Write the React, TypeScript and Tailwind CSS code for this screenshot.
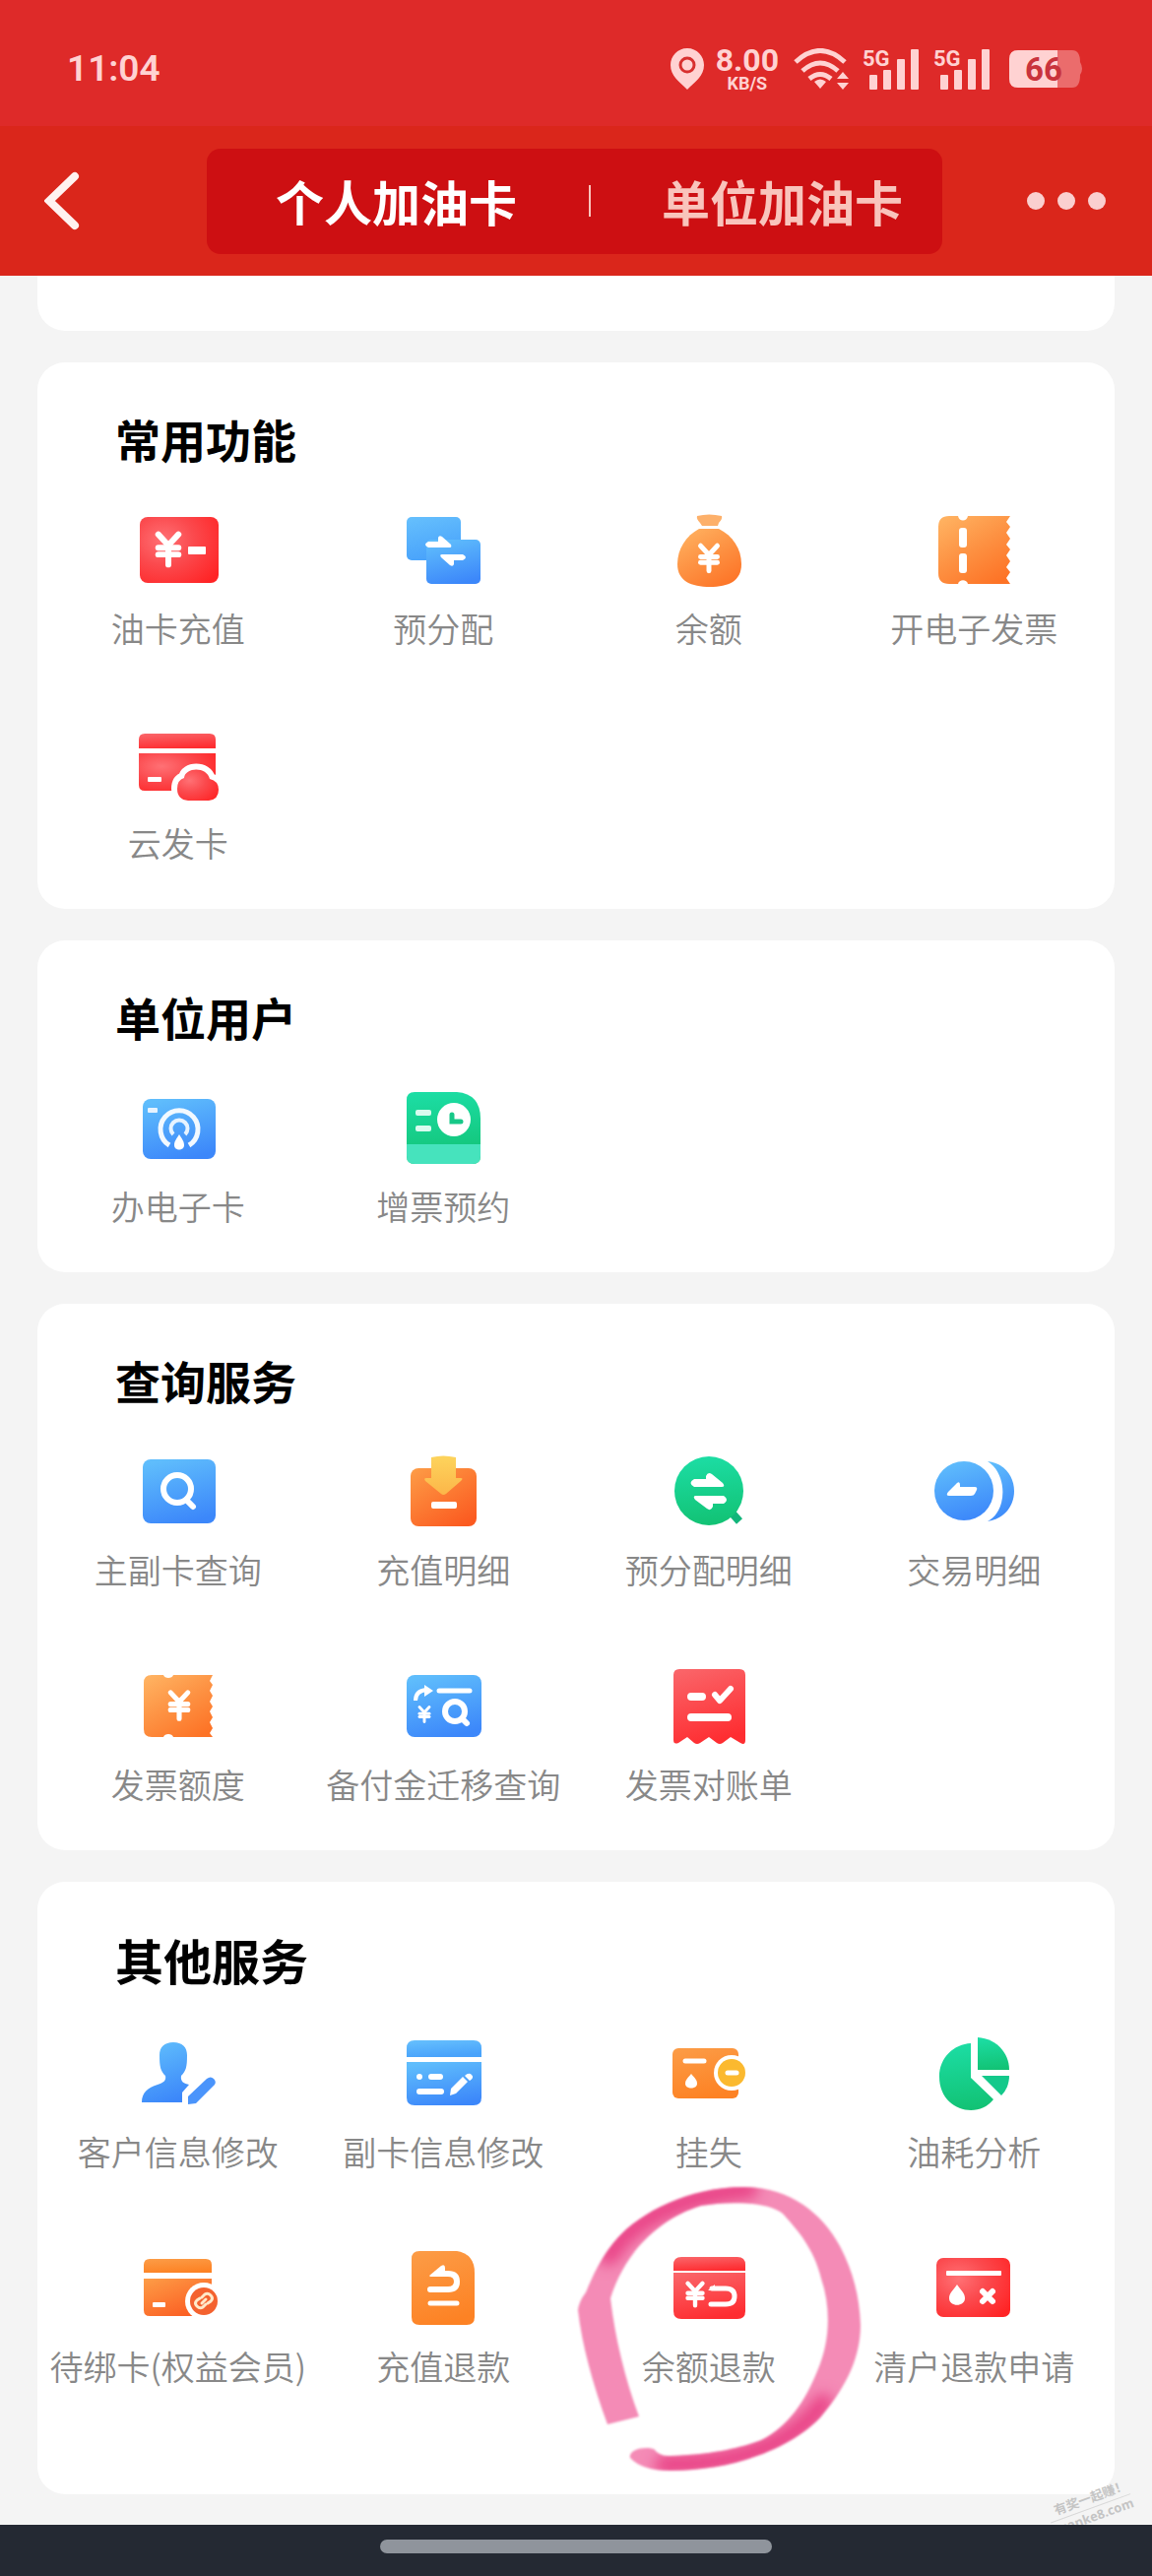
import type { ReactNode } from 'react'
import { clsx } from 'clsx'
import { JapaneseYen } from 'lucide-react'

type Item = { label: string; icon: ReactNode; marked?: boolean }
type Section = { title: string; items: Item[]; last?: boolean }

// Gradients shared by all the service icons
const Gradients = () => (
  <svg className="absolute h-0 w-0" aria-hidden="true">
    <defs>
      <radialGradient id="red" cx="0.3" cy="0.35" r="0.85">
        <stop offset="0" stopColor="#ff7175" />
        <stop offset="0.45" stopColor="#fb4a4e" />
        <stop offset="1" stopColor="#ff2425" />
      </radialGradient>
      <linearGradient id="redDown" x1="0.2" y1="0" x2="0.5" y2="1">
        <stop offset="0" stopColor="#fa6468" />
        <stop offset="1" stopColor="#fe2d31" />
      </linearGradient>
      <linearGradient id="blue" x1="0.3" y1="0" x2="0.6" y2="1">
        <stop offset="0" stopColor="#5fbdfc" />
        <stop offset="1" stopColor="#3c87fa" />
      </linearGradient>
      <linearGradient id="sky" x1="0" y1="0" x2="0.3" y2="1">
        <stop offset="0" stopColor="#66c0fd" />
        <stop offset="1" stopColor="#49a3fb" />
      </linearGradient>
      <linearGradient id="orange" x1="0.15" y1="0" x2="0.8" y2="1">
        <stop offset="0" stopColor="#ffb160" />
        <stop offset="0.5" stopColor="#fd9142" />
        <stop offset="1" stopColor="#fd7326" />
      </linearGradient>
      <linearGradient id="amber" x1="0.2" y1="0" x2="0.5" y2="1">
        <stop offset="0" stopColor="#fc9b45" />
        <stop offset="1" stopColor="#fd8224" />
      </linearGradient>
      <linearGradient id="flame" x1="0.1" y1="0" x2="0.8" y2="1">
        <stop offset="0" stopColor="#fd9a45" />
        <stop offset="1" stopColor="#fb5a20" />
      </linearGradient>
      <linearGradient id="yellow" x1="0" y1="0" x2="0" y2="1">
        <stop offset="0" stopColor="#fdd45c" />
        <stop offset="1" stopColor="#fcb649" />
      </linearGradient>
      <linearGradient id="green" x1="0.4" y1="0" x2="0.5" y2="1">
        <stop offset="0" stopColor="#1cdda4" />
        <stop offset="1" stopColor="#12c274" />
      </linearGradient>
    </defs>
  </svg>
)

const Glyph = ({ children }: { children: ReactNode }) => (
  <svg viewBox="0 0 80 80" className="h-20 w-20 overflow-visible" aria-hidden="true">
    {children}
  </svg>
)

// x and y are the centre of the sign
const Yen = ({ x, y, size }: { x: number; y: number; size: number }) => (
  <JapaneseYen x={x - size / 2} y={y - size / 2} size={size} color="#fff" strokeWidth={3.5} />
)

const line = { stroke: '#fff', strokeLinecap: 'round', strokeLinejoin: 'round', fill: 'none' } as const

const RechargeIcon = () => (
  <Glyph>
    <rect x="1" y="7" width="80" height="67" rx="8" fill="url(#red)" />
    <Yen x={30} y={40} size={41} />
    <rect x="50" y="37" width="18" height="8" rx="1" fill="#fff" />
  </Glyph>
)

const AllocateIcon = () => (
  <Glyph>
    <rect x="3" y="7" width="55" height="44" rx="5" fill="url(#sky)" />
    <rect x="23" y="30" width="55" height="45" rx="5" fill="url(#blue)" />
    <path d="M25 32h10v-4q1-3 4-1l9 8q1 3-1 3H25q-6-3 0-6z" fill="#fff" />
    <path d="M60 45H39q-3 0-1 3l9 8q3 2 4-1v-4h9q6-3 0-6z" fill="#fff" />
  </Glyph>
)

const BagIcon = () => (
  <Glyph>
    <path d="M28 6q12-3 25 0q1 3-3 7l-1 3H33l-2-3q-4-4-3-7z" fill="#fdb06a" />
    <path d="M30 19h20c14 7 23 20 23 36 0 17-13 23-32 23S8 72 8 55c0-16 9-29 22-36z" fill="url(#orange)" />
    <Yen x={40} y={49} size={34} />
  </Glyph>
)

const TicketIcon = () => (
  <Glyph>
    <path
      d="M15 6h9c1 6 9 6 10 0h43l-4 6 4 5-4 6 4 6-4 6 4 5-4 6 4 6-4 6 4 5-4 6 4 6H34c-1-5-9-5-10 0h-9Q4 75 4 64V17Q4 6 15 6z"
      fill="url(#orange)"
    />
    <rect x="25" y="18" width="8" height="20" rx="3" fill="#fff" />
    <rect x="25" y="44" width="8" height="20" rx="3" fill="#fff" />
  </Glyph>
)

const CloudCardIcon = () => (
  <Glyph>
    <path d="M6 9h66q6 0 6 6v9H0v-9q0-6 6-6z" fill="url(#redDown)" />
    <path d="M0 29h78v38H6q-6 0-6-6z" fill="url(#red)" />
    <rect x="9" y="53" width="14" height="5" rx="1" fill="#fff" />
    <path
      d="M50 77q-11-1-11-12 0-9 7-11c1-11 23-12 26 1q9 2 9 11 0 10-10 11z"
      fill="#fff"
      stroke="#fff"
      strokeWidth="12"
    />
    <path d="M50 77q-11-1-11-12 0-9 7-11c1-11 23-12 26 1q9 2 9 11 0 10-10 11z" fill="url(#red)" />
  </Glyph>
)

const ECardIcon = () => (
  <Glyph>
    <rect x="4" y="11" width="74" height="61" rx="8" fill="url(#blue)" />
    <rect x="9" y="20" width="10" height="5" rx="1" fill="#e6f3ff" />
    <path d="M31 58a19 19 0 1 1 20 0" {...line} stroke="#f2f9ff" strokeWidth="5" strokeLinecap="butt" />
    <path d="M35 47a8.500 8.500 0 1 1 12 0" {...line} stroke="#e6f3ff" strokeWidth="4" strokeLinecap="butt" />
    <path d="M41 47c3 5 5 7 5 11 0 6-10 6-10 0 0-4 2-6 5-11z" fill="#fff" />
  </Glyph>
)

const ReserveIcon = () => (
  <Glyph>
    <path d="M11 4h43q24 2 24 27v38q0 8-8 8H11q-8 0-8-8V12q0-8 8-8z" fill="url(#green)" />
    <path d="M3 57h75v12q0 8-8 8H11q-8 0-8-8z" fill="#46e3bd" />
    <rect x="12" y="22" width="16" height="6" rx="2" fill="#d9fbef" />
    <rect x="12" y="38" width="16" height="6" rx="2" fill="#d9fbef" />
    <circle cx="51" cy="32" r="17" fill="#fff" />
    <path d="M49 27v7h9" fill="none" stroke="#17c888" strokeWidth="5" strokeLinecap="round" />
  </Glyph>
)

const SearchCardIcon = () => (
  <Glyph>
    <rect x="4" y="8" width="74" height="65" rx="8" fill="url(#blue)" />
    <circle cx="39" cy="38" r="14" {...line} strokeWidth="6" />
    <path d="M50 51l5 5" {...line} strokeWidth="6" />
  </Glyph>
)

const RechargeListIcon = () => (
  <Glyph>
    <rect x="7" y="17" width="67" height="59" rx="8" fill="url(#flame)" />
    <path d="M28 6q12-3 25 0v21h5q3 0 0 3L43 43q-3 2-5 0L22 30q-2-3 1-3h5z" fill="url(#yellow)" />
    <rect x="28" y="51" width="26" height="7" rx="2" fill="#fff" />
  </Glyph>
)

const AllocateListIcon = () => (
  <Glyph>
    <path d="M63 62l8 9" fill="none" stroke="#12b57a" strokeWidth="8" />
    <circle cx="40" cy="40" r="35" fill="url(#green)" />
    <path d="M25 28h12v-3q2-5 6-2l11 9q3 4-1 4H25q-7-4 0-8z" fill="#fff" />
    <path d="M55 45H27q-4 0-1 4l12 9q4 3 6-2v-3h11q6-4 0-8z" fill="#fff" />
  </Glyph>
)

const TradeIcon = () => (
  <Glyph>
    <path d="M54 10C90 14 90 66 54 71 75 60 74 22 54 10z" fill="url(#blue)" />
    <circle cx="30" cy="40" r="30" fill="url(#blue)" />
    <path d="M14 41l9-9q3-2 3 2v2h15q3 0 2 3l-2 4q-1 2-4 2H15q-4 0-1-4z" fill="#fff" />
  </Glyph>
)

const QuotaIcon = () => (
  <Glyph>
    <path
      d="M13 9h12c1 4 9 4 10 0h40l-3 6 3 4-3 6 3 5-3 6 3 5-3 5 3 6-3 5 3 6-3 5 3 4H35c-1-4-9-4-10 0H13q-8 0-8-8V17q0-8 8-8z"
      fill="url(#orange)"
    />
    <Yen x={41} y={40} size={35} />
  </Glyph>
)

const MigrateIcon = () => (
  <Glyph>
    <rect x="3" y="9" width="76" height="63" rx="8" fill="url(#blue)" />
    <path d="M36 25h31" {...line} strokeWidth="5" />
    <path d="M12 35q0-10 11-11" {...line} strokeWidth="4" strokeLinecap="butt" />
    <path d="M21 19l9 6-9 6z" fill="#fff" />
    <Yen x={21} y={49} size={20} />
    <circle cx="52" cy="46" r="10" {...line} strokeWidth="6" />
    <path d="M60 54l4 4" {...line} strokeWidth="6" />
  </Glyph>
)

const ReceiptIcon = () => (
  <Glyph>
    <path
      d="M10 3h61q6 0 6 6v66q0 6-5 3l-10-6-8 6q-3 2-6 0l-8-6-9 6q-3 2-6 0l-7-6-9 6q-5 2-5-3V9q0-6 6-6z"
      fill="url(#redDown)"
    />
    <path d="M22 31h11M22 52h37" {...line} strokeWidth="8" />
    <path d="M46 29l5 6 11-12" {...line} strokeWidth="6" />
  </Glyph>
)

const CustomerIcon = () => (
  <Glyph>
    <path
      d="M35 9c9 0 14 5 14 13 0 12-1 16-6 21-1 6 3 8 8 9l-7 8v10H3c0-10 6-15 16-18 6-2 9-4 8-9-5-5-6-9-6-21C21 14 26 9 35 9z"
      fill="url(#blue)"
    />
    <path d="M50 72v-8l19-18q4-3 7 0t1 6L58 71z" fill="#4a94fb" />
  </Glyph>
)

const SubCardIcon = () => (
  <Glyph>
    <path d="M11 7h60q8 0 8 8v9H3v-9q0-8 8-8z" fill="url(#sky)" />
    <path d="M3 29h76v36q0 8-8 8H11q-8 0-8-8z" fill="url(#blue)" />
    <circle cx="16" cy="44" r="3" fill="#fff" />
    <path d="M28 44h9M16 59h22" {...line} strokeWidth="6" />
    <path d="M47 63l1-7 12-12 5 5-12 12zM62 43q4-4 7-1t-2 6z" fill="#fff" />
  </Glyph>
)

const LossIcon = () => (
  <Glyph>
    <rect x="3" y="15" width="67" height="51" rx="6" fill="url(#amber)" />
    <circle cx="63" cy="40" r="18" fill="#fff" />
    <circle cx="63" cy="40" r="14" fill="#fbb92f" />
    <path d="M59 40h9" {...line} strokeWidth="5" />
    <path d="M16 28h19" {...line} strokeWidth="5" />
    <path d="M22 41c4 5 6 6 6 10 0 6-12 6-12 0 0-4 2-5 6-10z" fill="#fff" />
  </Glyph>
)

const PieIcon = () => (
  <Glyph>
    <path d="M37 10v35l23 22C44 88 5 78 5 44 5 24 20 11 37 10z" fill="url(#green)" />
    <path d="M44 4c17 1 32 14 32 33H44z" fill="url(#green)" />
    <path d="M48 43h28c0 8-3 15-8 20z" fill="#14c98b" />
  </Glyph>
)

const BindCardIcon = () => (
  <Glyph>
    <path d="M11 11h57q6 0 6 6v8H5v-8q0-6 6-6z" fill="url(#amber)" />
    <path d="M5 31h69v38H11q-6 0-6-6z" fill="url(#flame)" />
    <rect x="14" y="55" width="13" height="5" rx="1" fill="#fff" />
    <circle cx="66" cy="54" r="19" fill="#fff" />
    <circle cx="66" cy="54" r="14" fill="#f4622f" />
    <path
      d="M64 50l3-3q3-2 6 1t0 6l-3 2M68 57l-3 3q-3 2-6-1t0-6l3-2M64 56l4-4"
      {...line}
      stroke="#ffe9c9"
      strokeWidth="3"
    />
  </Glyph>
)

const RefundIcon = () => (
  <Glyph>
    <path d="M16 3h38q18 3 18 22v45q0 8-8 8H16q-8 0-8-8V11q0-8 8-8z" fill="url(#amber)" />
    <path d="M34 26h11q9 0 9 8t-9 8H27" {...line} strokeWidth="6" />
    <path d="M26 28l12-10q4-2 4 2v9H27z" fill="#fff" />
    <path d="M27 56h27" {...line} strokeWidth="5" />
  </Glyph>
)

const BalanceRefundIcon = () => (
  <Glyph>
    <path d="M12 9h57q8 0 8 8v6H4v-6q0-8 8-8z" fill="url(#redDown)" />
    <path d="M4 25h73v39q0 8-8 8H12q-8 0-8-8z" fill="url(#redDown)" />
    <Yen x={26} y={47} size={30} />
    <path d="M43 41h14q9 0 9 8t-9 8H42" {...line} strokeWidth="5" />
    <path d="M39 43l7-6v6z" fill="#fff" />
  </Glyph>
)

const CloseAccountIcon = () => (
  <Glyph>
    <rect x="2" y="10" width="75" height="60" rx="7" fill="url(#red)" />
    <rect x="12" y="23" width="56" height="5" rx="1" fill="#fff" />
    <path d="M23 37c5 7 8 9 8 14 0 9-16 9-16 0 0-5 3-7 8-14z" fill="#fff" />
    <path d="M49 44l10 10M59 44L49 54" {...line} strokeWidth="6" />
  </Glyph>
)

const sections: Section[] = [
  {
    title: '常用功能',
    items: [
      { label: '油卡充值', icon: <RechargeIcon /> },
      { label: '预分配', icon: <AllocateIcon /> },
      { label: '余额', icon: <BagIcon /> },
      { label: '开电子发票', icon: <TicketIcon /> },
      { label: '云发卡', icon: <CloudCardIcon /> },
    ],
  },
  {
    title: '单位用户',
    items: [
      { label: '办电子卡', icon: <ECardIcon /> },
      { label: '增票预约', icon: <ReserveIcon /> },
    ],
  },
  {
    title: '查询服务',
    items: [
      { label: '主副卡查询', icon: <SearchCardIcon /> },
      { label: '充值明细', icon: <RechargeListIcon /> },
      { label: '预分配明细', icon: <AllocateListIcon /> },
      { label: '交易明细', icon: <TradeIcon /> },
      { label: '发票额度', icon: <QuotaIcon /> },
      { label: '备付金迁移查询', icon: <MigrateIcon /> },
      { label: '发票对账单', icon: <ReceiptIcon /> },
    ],
  },
  {
    title: '其他服务',
    last: true,
    items: [
      { label: '客户信息修改', icon: <CustomerIcon /> },
      { label: '副卡信息修改', icon: <SubCardIcon /> },
      { label: '挂失', icon: <LossIcon /> },
      { label: '油耗分析', icon: <PieIcon /> },
      { label: '待绑卡(权益会员)', icon: <BindCardIcon /> },
      { label: '充值退款', icon: <RefundIcon /> },
      { label: '余额退款', icon: <BalanceRefundIcon />, marked: true },
      { label: '清户退款申请', icon: <CloseAccountIcon /> },
    ],
  },
]

// Hand-drawn marker ring
const MarkerRing = () => (
  <svg
    viewBox="560 2212 320 304"
    className="pointer-events-none absolute -top-8 left-1/2 h-[304px] w-[320px] -translate-x-1/2"
    aria-hidden="true"
  >
    <defs>
      <filter id="soft" x="-5%" y="-5%" width="110%" height="110%">
        <feGaussianBlur stdDeviation="1.2" />
      </filter>
      <filter id="softer" x="-20%" y="-20%" width="140%" height="140%">
        <feGaussianBlur stdDeviation="7" />
      </filter>
      <clipPath id="ring">
        <path d="M617 2461C602 2420 591 2380 587 2345Q588 2336 595 2327C604 2305 613 2288 627 2272 650 2246 700 2220 754 2220 800 2219 835 2246 853 2280 866 2305 873 2330 874 2360 874 2390 862 2420 834 2453 805 2485 745 2508 681 2508Q652 2508 640 2495C638 2486 655 2483 664 2486Q670 2494 681 2493C725 2492 755 2484 773 2477 800 2464 818 2437 830 2407 842 2380 845 2345 834 2313 826 2280 808 2262 795 2247 780 2235 740 2234 712 2239 670 2252 635 2285 620 2333 625 2375 635 2415 649 2453z" />
      </clipPath>
    </defs>
    <g filter="url(#soft)">
      <g clipPath="url(#ring)">
        <rect x="558" y="2212" width="322" height="304" fill="#f48bb6" />
        <g fill="none" strokeLinecap="round" filter="url(#softer)">
          <path d="M618 2290Q655 2233 760 2222" stroke="#e94587" strokeWidth="20" />
          <path d="M836 2440Q790 2502 675 2502" stroke="#e94587" strokeWidth="20" />
        </g>
      </g>
    </g>
  </svg>
)

const SignalIcon = () => (
  <svg viewBox="0 0 58 44" className="h-11 w-[58px] overflow-visible" fill="#ffd2d2" aria-hidden="true">
    <text x="0" y="19" fontSize="22" className="font-[Roboto,sans-serif] font-bold">
      5G
    </text>
    <rect x="7" y="28" width="8" height="15" rx="1" />
    <rect x="21" y="23" width="8" height="20" rx="1" />
    <rect x="35" y="12" width="8" height="31" rx="1" />
    <rect x="49" y="2" width="8" height="41" rx="1" />
  </svg>
)

const StatusBar = () => (
  <div className="flex h-32 items-center justify-between bg-[#de2a29] pt-3 pr-[71px] pl-[68px] font-[Roboto,sans-serif] text-[#ffd2d2]">
    <span className="text-[37px] font-semibold">11:04</span>
    <div className="flex items-center">
      <svg viewBox="0 0 34 42" className="h-[42px] w-[34px]" aria-hidden="true">
        <path d="M17 0c10 0 17 8 17 17 0 11-9 17-17 25C9 34 0 28 0 17 0 8 7 0 17 0z" fill="#ffd2d2" />
        <circle cx="17" cy="17" r="7" fill="none" stroke="#d8302f" strokeWidth="3" />
      </svg>
      <div className="ml-3 flex flex-col items-center font-bold">
        <span className="text-[32px] leading-[30px]">8.00</span>
        <span className="text-[18px] leading-[18px]">KB/S</span>
      </div>
      <svg viewBox="0 0 56 42" className="ml-[15px] h-[42px] w-14" fill="none" stroke="#ffd2d2" aria-hidden="true">
        <path d="M2 14Q27-9 52 14" strokeWidth="5" />
        <path d="M9 23Q27 7 45 23" strokeWidth="5" />
        <path d="M16 31Q27 22 38 31" strokeWidth="5" />
        <path d="M27 41l-6-7q6-5 12 0z" fill="#ffd2d2" stroke="none" />
        <path d="M50 24l6 7H44zM50 42l6-7H44z" fill="#ffd2d2" stroke="none" />
      </svg>
      <div className="ml-[14px] flex gap-[14px]">
        <SignalIcon />
        <SignalIcon />
      </div>
      <svg viewBox="0 0 74 38" className="ml-[19px] h-[38px] w-[74px]" aria-hidden="true">
        <path d="M9 0h55q8 0 8 12 4 7 0 13 0 13-8 13H9q-9 0-9-9V9q0-9 9-9z" fill="#eb6c6c" />
        <path d="M9 0h40v38H9q-9 0-9-9V9q0-9 9-9z" fill="#ffd2d2" />
        <text x="35" y="31" fontSize="33" textAnchor="middle" fill="#c9333c" className="font-bold">
          66
        </text>
      </svg>
    </div>
  </div>
)

const Header = () => (
  <header className="flex h-[152px] items-center justify-between bg-[#da261b] pr-[47px] pl-[45px]">
    <button aria-label="返回" className="flex w-[79px]">
      <svg viewBox="0 0 36 60" className="h-[60px] w-9" aria-hidden="true">
        <path d="M31 5L5 30l26 25" fill="none" stroke="#fff2f0" strokeWidth="8" strokeLinecap="round" />
      </svg>
    </button>
    <nav className="mx-[86px] flex h-[107px] flex-1 items-center justify-between rounded-[14px] bg-[#cd0f12] pr-10 pl-[70px] text-[49px] font-bold">
      <button className="whitespace-nowrap text-white">个人加油卡</button>
      <span className="h-8 w-0.5 bg-[#f9c4bc]" />
      <button className="whitespace-nowrap text-[#f9c4bc]">单位加油卡</button>
    </nav>
    <button aria-label="更多" className="flex w-20 justify-between">
      <span className="h-[18px] w-[18px] rounded-full bg-[#facfcf]" />
      <span className="h-[18px] w-[18px] rounded-full bg-[#facfcf]" />
      <span className="h-[18px] w-[18px] rounded-full bg-[#facfcf]" />
    </button>
  </header>
)

const SectionCard = ({ title, items, last }: Section) => (
  <section className={clsx('rounded-[28px] bg-white px-2 pt-[45px]', last ? 'pb-[70px]' : 'pb-[7px]')}>
    <h2 className={clsx('pl-[71px] font-bold text-black', last ? 'text-[49px] leading-[68px]' : 'text-[46px] leading-[64px]')}>
      {title}
    </h2>
    <ul className="mt-[3px] grid grid-cols-4">
      {items.map(({ label, icon, marked }) => (
        <li key={label} className="relative">
          <button className="flex w-full flex-col items-center pt-[38px] pb-9">
            {icon}
            <span className="mt-4 text-[34px] leading-[48px] font-[350] whitespace-nowrap text-[#888]">{label}</span>
          </button>
          {marked && <MarkerRing />}
        </li>
      ))}
    </ul>
  </section>
)

export default function App() {
  return (
    <div className="bg-[#f4f4f4] font-['Noto_Sans_CJK_SC',sans-serif]">
      <Gradients />
      <StatusBar />
      <Header />
      <main className="relative flex flex-col gap-8 overflow-hidden px-[38px] pb-[31px]">
        <div className="h-14 rounded-b-[28px] bg-white" />
        {sections.map((section) => (
          <SectionCard key={section.title} {...section} />
        ))}
        {/* Watermark */}
        <div className="absolute right-5 bottom-0 -rotate-[20deg] text-right text-[13px] font-bold text-[#c4c4c4]">
          <p className="leading-5">有奖一起赚！</p>
          <p className="border-t border-[#d8d8d8] font-['Open_Sans',sans-serif] leading-4">zuanke8.com</p>
        </div>
      </main>
      <footer className="flex h-[53px] justify-center bg-[#242933] pt-[15px]">
        <div className="h-[14px] w-[34%] rounded-full bg-[#8f949c]" />
      </footer>
    </div>
  )
}
